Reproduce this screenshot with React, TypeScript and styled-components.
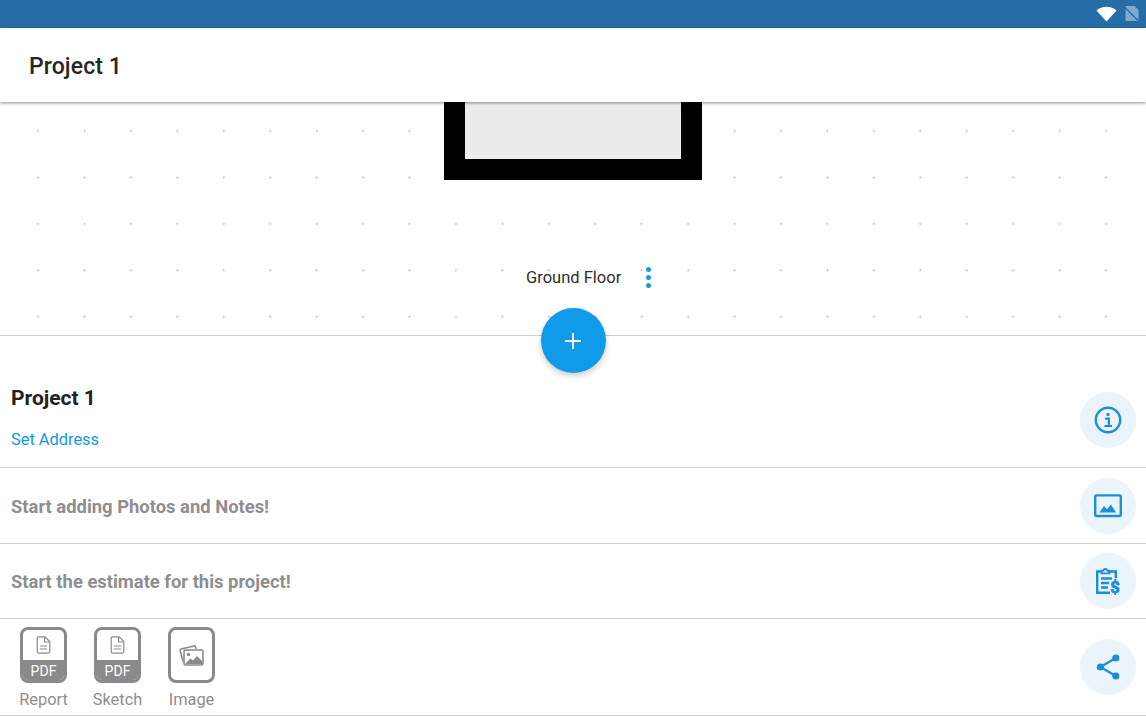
import React from "react";
import styled, { createGlobalStyle } from "styled-components";

const Global = createGlobalStyle`
  html, body { margin: 0; padding: 0; background: #fff; overflow: hidden; }
  body { font-family: Roboto, "Liberation Sans", sans-serif; }
  * { box-sizing: border-box; }
`;
const Page = styled.div`
  width: 1146px; height: 716px; display: flex; flex-direction: column; overflow: hidden; background: #fff;
`;
const StatusBar = styled.div`
  height: 28px; flex: none; background: #246da6; display: flex; align-items: center; justify-content: flex-end;
  gap: 8px; padding: 0 7px 1px 0;
`;
const Header = styled.header`
  height: 74px; flex: none; background: #fff; display: flex; align-items: center; padding: 0 29px;
  box-shadow: 0 1px 3px rgba(0,0,0,.45); position: relative; z-index: 2;
`;
const HeaderTitle = styled.h1`
  margin: 0; font-size: 23px; line-height: 28px; font-weight: 500; color: #262626; letter-spacing: 0.1px; padding-top: 3px;
`;
const Canvas = styled.section`
  position: relative; height: 233px; flex: none; background-color: #fff;
  background-image: radial-gradient(circle, #c9c9c9 0.9px, transparent 1.3px);
  background-size: 46.45px 46.45px; background-position: 14.8px 5.8px;
`;
const Room = styled.div`
  position: absolute; left: 444px; top: 0; width: 258px; height: 78px; background: #ececec;
  border: 21px solid #000; border-top: 0;
`;
const FloorLabel = styled.div`
  position: absolute; left: 526px; top: 165px; display: flex; align-items: center; gap: 25px;
  font-size: 16.5px; line-height: 20px; color: #2e2e2e;
`;
const Dots = styled.span`
  display: flex; flex-direction: column; gap: 3px;
  i { width: 5px; height: 5px; border-radius: 50%; background: #1f97dc; display: block; }
`;
const Fab = styled.button`
  position: absolute; left: 540.5px; top: 206px; width: 65px; height: 65px; border: 0; padding: 0; border-radius: 50%;
  background: #0f9aea; box-shadow: 0 3px 6px rgba(0,0,0,.2); display: flex; align-items: center; justify-content: center; z-index: 1;
`;
const Row = styled.div<{ $h: number; $end?: boolean }>`
  height: ${(p) => p.$h}px; flex: none; border-top: 1px solid #cfcfcf; display: flex; justify-content: space-between;
  align-items: ${(p) => (p.$end ? "flex-end" : "center")}; padding: ${(p) => (p.$end ? "0 10px 19px 11px" : "0 10px 0 11px")};
`;
const InfoText = styled.div`
  align-self: flex-start; padding-top: 50px; display: flex; flex-direction: column; gap: 20px;
`;
const ProjectName = styled.h2`
  margin: 0; font-size: 21px; line-height: 24px; font-weight: 700; color: #222;
`;
const AddressLink = styled.a`
  font-size: 16.4px; line-height: 20px; color: #109ae6;
`;
const Hint = styled.p`
  margin: 0; padding-top: 2px; font-size: 18.4px; line-height: 22px; font-weight: 700; color: #8e8e90;
`;
const RoundButton = styled.button`
  width: 56px; height: 56px; border: 0; padding: 0; border-radius: 50%; background: #ebf4fa; flex: none;
  display: flex; align-items: center; justify-content: center;
`;
const Exports = styled.div`
  display: flex; gap: 27px; padding-left: 9px; align-self: flex-start; padding-top: 8px;
`;
const ExportItem = styled.div`
  width: 47px; display: flex; flex-direction: column; align-items: center; gap: 7px;
`;
const Tile = styled.div`
  width: 47px; height: 56px; border: 3px solid #8a8a8c; border-radius: 8px; overflow: hidden;
  display: flex; flex-direction: column; align-items: center; background: #fff;
`;
const TileBody = styled.div`
  flex: 1; display: flex; align-items: center; justify-content: center;
`;
const PdfBand = styled.div`
  width: 100%; height: 20px; background: #8a8a8c; color: #fff; font-size: 14px; line-height: 22px; text-align: center;
`;
const ExportLabel = styled.span`
  font-size: 16.4px; line-height: 20px; color: #8e8e90; white-space: nowrap;
`;
const Bottom = styled.div`
  height: 1px; flex: none; background: #cfcfcf;
`;

const Blue = "#1a8ed6";

const Wifi = () => (
  <svg width="21" height="16" viewBox="0 0 21 16"><path d="M0.5 4.6C3.2 2 6.6 .8 10.5 .8s7.3 1.2 10 3.8L10.5 15.6z" fill="#fff" /></svg>
);
const NoSim = () => (
  <svg width="14" height="15" viewBox="0 0 14 15">
    <path d="M.5 0H9.5L13.5 4V15H.5z" fill="#fff" opacity=".42" />
    <path d="M0 1.5L13 14.5" stroke="#246da6" strokeWidth="1.2" />
  </svg>
);
const InfoIcon = () => (
  <svg width="28" height="28" viewBox="0 0 28 28" fill="none" stroke={Blue} strokeWidth="2.4">
    <circle cx="14" cy="14" r="12.2" />
    <circle cx="14" cy="8.4" r="1.7" fill={Blue} stroke="none" />
    <path d="M11.2 12.6H14.8V19.6M10.4 20H18" strokeWidth="2.2" />
  </svg>
);
const PhotoIcon = () => (
  <svg width="28" height="24" viewBox="0 0 28 24" fill="none">
    <rect x="1.2" y="1.4" width="25.6" height="20.6" rx="1.5" stroke={Blue} strokeWidth="2.4" />
    <path d="M5.5 18.5L10 12L13 15.2L17 10.5L22 18.5z" fill={Blue} />
  </svg>
);
const EstimateIcon = () => (
  <svg width="27" height="28" viewBox="0 0 27 28" fill="none" stroke={Blue} strokeWidth="2.4">
    <path d="M15 25.8H2.2V4.5H7M13 4.5H20.8V11" />
    <path d="M6.5 6.4V3.6H8.6C8.8 1.4 12 1.4 12.2 3.6H14.4V6.4z" strokeWidth="1.8" />
    <path d="M6 11.5H17M6 16H14M6 20.5H13" />
    <text x="15" y="25.5" fontFamily="Roboto, sans-serif" fontWeight="900" fontSize="17" fill={Blue} stroke={Blue} strokeWidth=".5">$</text>
  </svg>
);
const ShareIcon = () => (
  <svg width="24" height="26" viewBox="0 0 24 26" fill={Blue}>
    <circle cx="19.8" cy="4" r="3.6" /><circle cx="4.4" cy="13" r="3.6" /><circle cx="19.8" cy="22" r="3.6" />
    <path d="M19.8 4L4.4 13L19.8 22" fill="none" stroke={Blue} strokeWidth="2.2" />
  </svg>
);
const DocIcon = () => (
  <svg width="15" height="18" viewBox="0 0 15 18" fill="none" stroke="#8a8a8c" strokeWidth="1.2">
    <path d="M2.6 .8H9L13.8 5.6V15.4A1.8 1.8 0 0 1 12 17.2H3A1.8 1.8 0 0 1 1.2 15.4V2.2A1.4 1.4 0 0 1 2.6 .8z" />
    <path d="M8.6 1V6H13.6M4 10H11M4 13H11" />
  </svg>
);
const ImagesIcon = () => (
  <svg width="25" height="21" viewBox="0 0 25 21" fill="none" stroke="#8a8a8c" strokeWidth="1.6">
    <path d="M4 16.5L1.2 5.6C1 4.8 1.4 4.2 2.2 4L15 1C15.8 .8 16.4 1.2 16.6 2L17 4" />
    <rect x="5" y="5" width="19" height="15" rx="1.6" fill="#fff" />
    <circle cx="9.5" cy="9.5" r="1.7" fill="#8a8a8c" stroke="none" />
    <path d="M6 19L11.5 13.5L14 15.5L18 11L23.5 16.5V19z" fill="#8a8a8c" stroke="none" />
  </svg>
);

export default function App() {
  return (
    <Page>
      <Global />
      <StatusBar><Wifi /><NoSim /></StatusBar>
      <Header><HeaderTitle>Project 1</HeaderTitle></Header>
      <Canvas>
        <Room />
        <FloorLabel>Ground Floor<Dots><i /><i /><i /></Dots></FloorLabel>
        <Fab aria-label="Add">
          <svg width="18" height="18" viewBox="0 0 18 18"><path d="M9 1V17M1 9H17" stroke="#fff" strokeWidth="2" /></svg>
        </Fab>
      </Canvas>
      <Row $h={132} $end>
        <InfoText>
          <ProjectName>Project 1</ProjectName>
          <AddressLink>Set Address</AddressLink>
        </InfoText>
        <RoundButton aria-label="Info"><InfoIcon /></RoundButton>
      </Row>
      <Row $h={76}>
        <Hint>Start adding Photos and Notes!</Hint>
        <RoundButton aria-label="Photos"><PhotoIcon /></RoundButton>
      </Row>
      <Row $h={75}>
        <Hint>Start the estimate for this project!</Hint>
        <RoundButton aria-label="Estimate"><EstimateIcon /></RoundButton>
      </Row>
      <Row $h={97}>
        <Exports>
          <ExportItem>
            <Tile><TileBody><DocIcon /></TileBody><PdfBand>PDF</PdfBand></Tile>
            <ExportLabel>Report</ExportLabel>
          </ExportItem>
          <ExportItem>
            <Tile><TileBody><DocIcon /></TileBody><PdfBand>PDF</PdfBand></Tile>
            <ExportLabel>Sketch</ExportLabel>
          </ExportItem>
          <ExportItem>
            <Tile><TileBody><ImagesIcon /></TileBody></Tile>
            <ExportLabel>Image</ExportLabel>
          </ExportItem>
        </Exports>
        <RoundButton aria-label="Share"><ShareIcon /></RoundButton>
      </Row>
      <Bottom />
    </Page>
  );
}
